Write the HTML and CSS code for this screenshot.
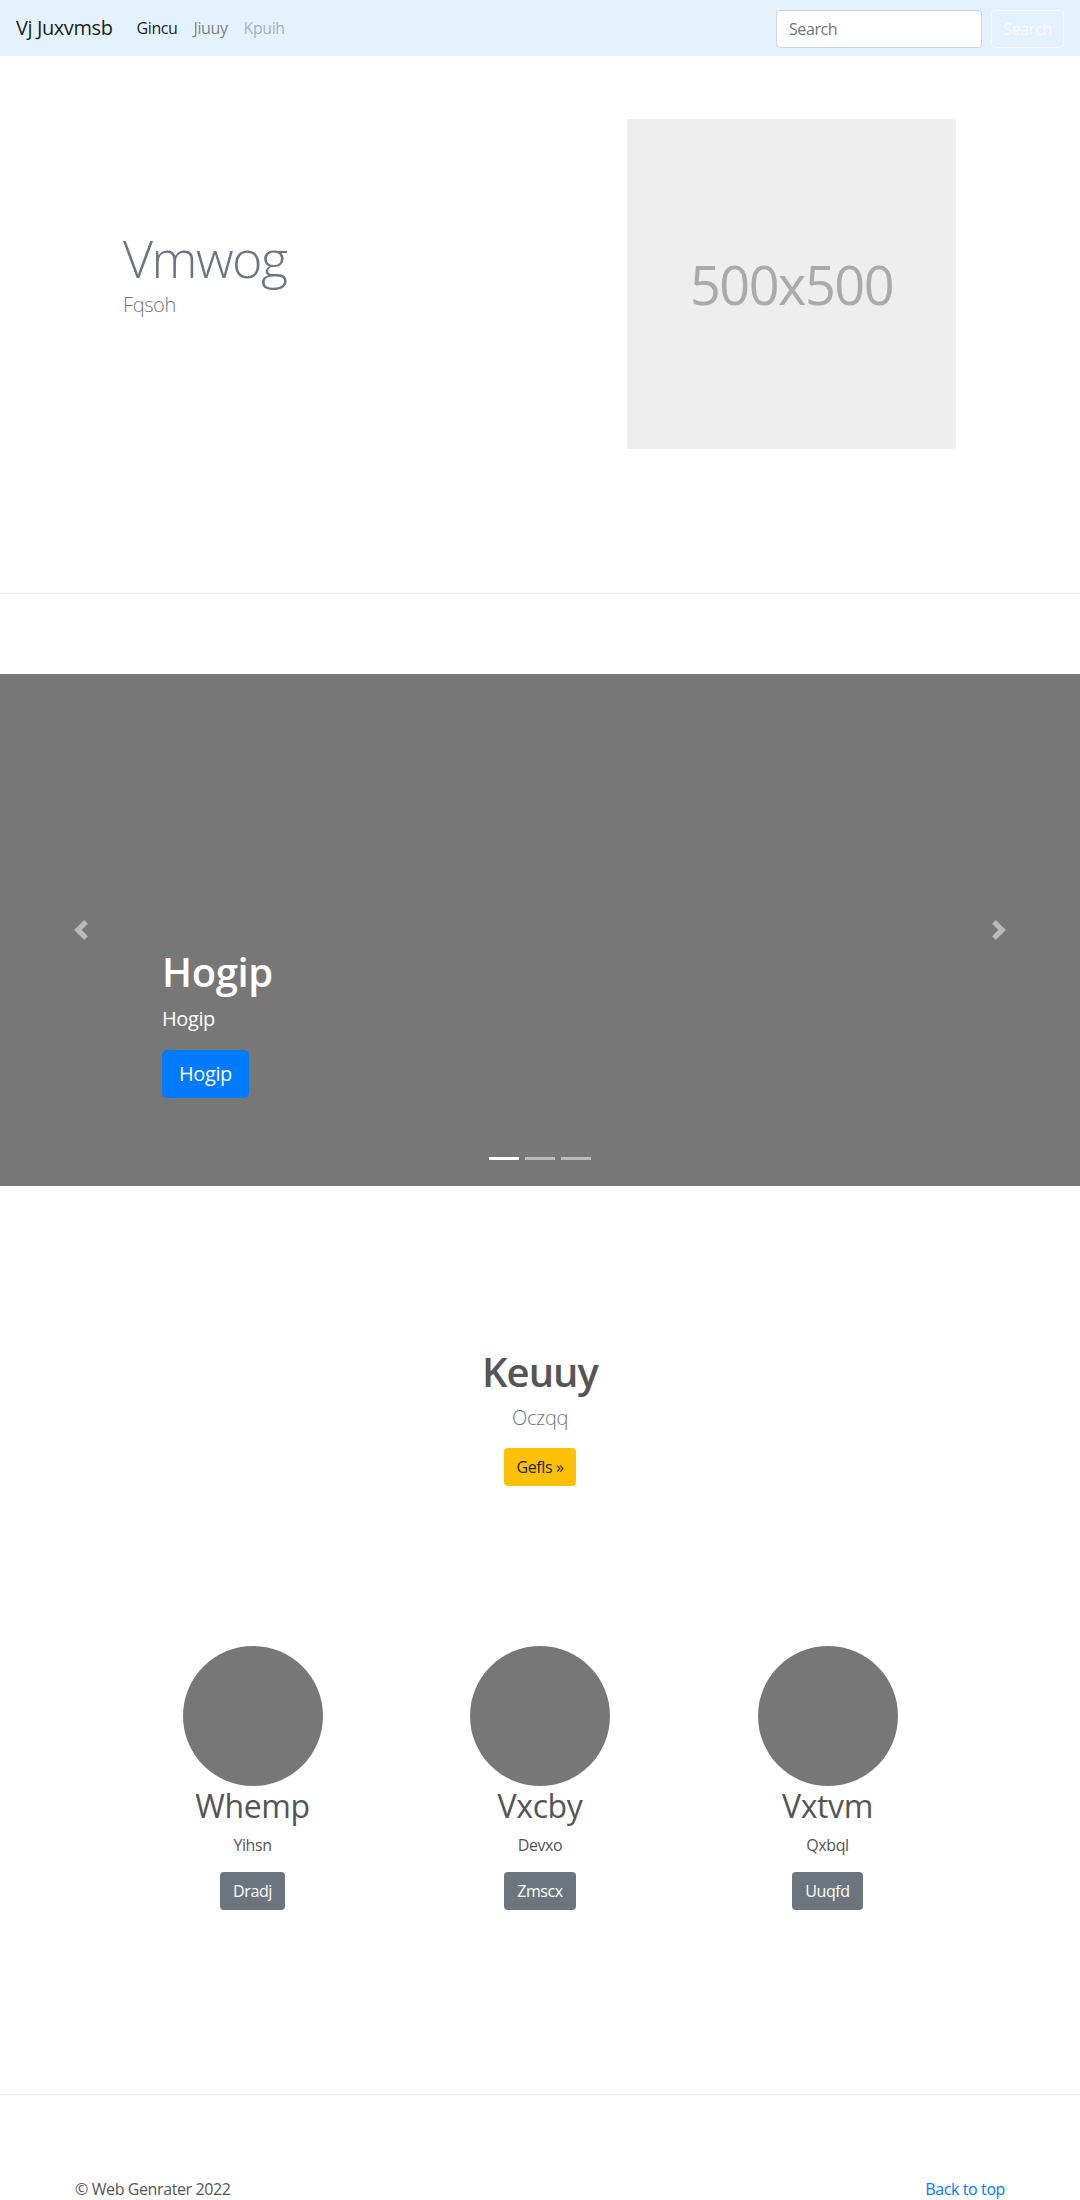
FILE: index.html
```html
<!DOCTYPE html>
<html lang="en">
<head>
<meta charset="utf-8">
<title>Vj Juxvmsb</title>
<link rel="stylesheet" href="styles.css">
</head>
<body>
<nav class="navbar">
  <a class="brand" href="#">Vj Juxvmsb</a>
  <ul class="nav-links">
    <li><a class="nav-link active" href="#">Gincu</a></li>
    <li><a class="nav-link" href="#">Jiuuy</a></li>
    <li><a class="nav-link disabled" href="#">Kpuih</a></li>
  </ul>
  <form class="search">
    <input class="search-input" type="text" placeholder="Search">
    <button class="search-btn" type="button">Search</button>
  </form>
</nav>

<section class="hero">
  <div class="hero-text">
    <h1 class="hero-title">Vmwog</h1>
    <p class="hero-lead">Fqsoh</p>
  </div>
  <div class="placeholder">500x500</div>
</section>

<hr class="divider">

<div class="carousel">
  <div class="caption">
    <h1 class="caption-title">Hogip</h1>
    <p class="caption-text">Hogip</p>
    <a class="btn btn-lg btn-primary" href="#">Hogip</a>
  </div>
  <a class="ctrl ctrl-prev" href="#">
    <svg class="ctrl-icon" viewBox="0 0 8 8" width="20" height="20"><path d="M5.25 0l-4 4 4 4 1.5-1.5L4.25 4l2.5-2.5L5.25 0z" fill="#fff"/></svg>
  </a>
  <a class="ctrl ctrl-next" href="#">
    <svg class="ctrl-icon" viewBox="0 0 8 8" width="20" height="20"><path d="M2.75 0l-1.5 1.5L3.75 4l-2.5 2.5L2.75 8l4-4-4-4z" fill="#fff"/></svg>
  </a>
  <ol class="indicators">
    <li class="ind active"></li>
    <li class="ind"></li>
    <li class="ind"></li>
  </ol>
</div>

<section class="feature">
  <h1 class="feature-title">Keuuy</h1>
  <p class="feature-lead">Oczqq</p>
  <a class="btn btn-warning" href="#">Gefls &raquo;</a>
</section>

<section class="marketing">
  <div class="col">
    <div class="circle"></div>
    <h2 class="col-title">Whemp</h2>
    <p class="col-text">Yihsn</p>
    <a class="btn btn-secondary" href="#">Dradj</a>
  </div>
  <div class="col">
    <div class="circle"></div>
    <h2 class="col-title">Vxcby</h2>
    <p class="col-text">Devxo</p>
    <a class="btn btn-secondary" href="#">Zmscx</a>
  </div>
  <div class="col">
    <div class="circle"></div>
    <h2 class="col-title">Vxtvm</h2>
    <p class="col-text">Qxbql</p>
    <a class="btn btn-secondary" href="#">Uuqfd</a>
  </div>
</section>

<hr class="divider divider-footer">

<footer class="footer">
  <p class="copy">&copy; Web Genrater 2022</p>
  <a class="back" href="#">Back to top</a>
</footer>
</body>
</html>
```

FILE: styles.css
```css
* { box-sizing: border-box; }

body {
  margin: 0;
  font-family: "Open Sans", "Noto Sans", sans-serif;
  font-size: 16px;
  line-height: 1.5;
  letter-spacing: -0.025em;
  color: #212529;
  background: #fff;
}

a { text-decoration: none; }

/* Navbar */
.navbar {
  display: flex;
  align-items: center;
  height: 56px;
  padding: 8px 16px;
  background: #e3f2fd;
}
.brand {
  font-size: 20px;
  line-height: 30px;
  padding: 5px 0;
  margin-right: 16px;
  color: rgba(0,0,0,.9);
}
.nav-links {
  display: flex;
  list-style: none;
  margin: 0;
  padding: 0;
}
.nav-link {
  display: block;
  padding: 8px;
  color: rgba(0,0,0,.5);
}
.nav-link.active { color: rgba(0,0,0,.9); }
.nav-link.disabled { color: rgba(0,0,0,.3); }

.search {
  display: flex;
  margin-left: auto;
  gap: 9px;
  padding-top: 1px;
}
.search-input {
  width: 206px;
  height: 38px;
  padding: 6px 12px;
  font-family: inherit;
  font-size: 16px;
  letter-spacing: -0.025em;
  color: #495057;
  background: #fff;
  border: 1px solid #ced4da;
  border-radius: 4px;
}
.search-input::placeholder { color: #6c757d; }
.search-btn {
  width: 73px;
  height: 38px;
  padding: 6px 10px;
  font-family: inherit;
  font-size: 16px;
  letter-spacing: -0.025em;
  color: #f8f9fa;
  background: transparent;
  border: 1px solid #f8f9fa;
  border-radius: 4px;
}

/* Hero */
.hero {
  display: flex;
  padding: 63px 0 144px 123px;
}
.hero-text {
  width: 504px;
  padding-top: 108px;
}
.hero-title {
  margin: 0 0 1px;
  font-size: 52px;
  font-weight: 300;
  line-height: 1.2;
  color: #6c757d;
  letter-spacing: -1.5px;
}
.hero-lead {
  margin: 0;
  font-size: 20px;
  font-weight: 300;
  line-height: 30px;
  color: #6c757d;
}
.placeholder {
  width: 329px;
  height: 330px;
  display: flex;
  align-items: center;
  justify-content: center;
  background: #eee;
  color: #aaa;
  font-size: 54px;
  letter-spacing: -1.5px;
}

.divider {
  margin: 0;
  height: 0;
  border: 0;
  border-top: 1px solid #e6e6e6;
}

/* Carousel */
.carousel {
  position: relative;
  height: 512px;
  margin-top: 80px;
  background: #777;
  display: flex;
  flex-direction: column;
  justify-content: flex-end;
  padding: 0 0 88px 162px;
}
.caption { color: #fff; }
.caption-title {
  margin: 0 0 8px;
  font-size: 40px;
  font-weight: 600;
  line-height: 48px;
}
.caption-text {
  margin: 0 0 16px;
  font-size: 20px;
  line-height: 30px;
}
.ctrl {
  position: absolute;
  top: 0;
  bottom: 0;
  width: 15%;
  display: flex;
  align-items: center;
  justify-content: center;
  opacity: .5;
}
.ctrl-prev { left: 0; }
.ctrl-next { right: 0; }
.ctrl-icon { display: block; }
.indicators {
  position: absolute;
  left: 0;
  right: 0;
  bottom: 16px;
  display: flex;
  justify-content: center;
  list-style: none;
  margin: 0;
  padding: 0;
}
.ind {
  width: 30px;
  height: 3px;
  margin: 10px 3px;
  background: #fff;
  opacity: .5;
}
.ind.active { opacity: 1; }

/* Buttons */
.btn {
  display: inline-block;
  padding: 6px 12px;
  font-size: 16px;
  line-height: 24px;
  border: 1px solid transparent;
  border-radius: 4px;
  text-align: center;
}
.btn-lg {
  padding: 8px 16px;
  font-size: 20px;
  line-height: 30px;
  border-radius: 5px;
}
.btn-primary { background: #007bff; color: #fff; }
.btn-warning { background: #ffc107; color: #212529; }
.btn-secondary { background: #6c757d; color: #fff; }

/* Feature */
.feature {
  padding-top: 162px;
  text-align: center;
}
.feature-title {
  margin: 0 0 7px;
  font-size: 40px;
  font-weight: 600;
  line-height: 48px;
  color: #555;
  letter-spacing: -1px;
}
.feature-lead {
  margin: 0 0 15px;
  font-size: 20px;
  font-weight: 300;
  line-height: 30px;
  color: #6c757d;
}

/* Marketing */
.marketing {
  display: grid;
  grid-template-columns: repeat(3, 287.5px);
  justify-content: center;
  margin-top: 160px;
  text-align: center;
}
.circle {
  width: 140px;
  height: 140px;
  margin: 0 auto;
  border-radius: 50%;
  background: #777;
}
.col-title {
  margin: 1px 0 8px;
  font-size: 32px;
  font-weight: 400;
  line-height: 38.4px;
  color: #555;
}
.col-text {
  margin: 0 0 15px;
  color: #555;
}

.divider-footer { margin-top: 184px; }

/* Footer */
.footer {
  width: 930px;
  margin: 0 auto;
  padding-top: 82px;
  display: flex;
  justify-content: space-between;
}
.copy {
  margin: 0;
  color: #555;
}
.back { color: #007bff; }
```
